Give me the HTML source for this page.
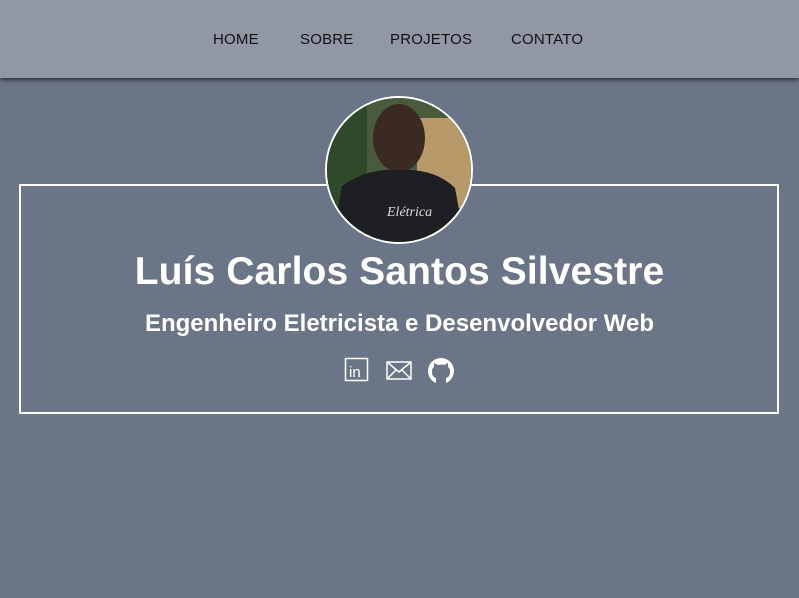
<!DOCTYPE html>
<html><head><style>
body{margin:0;width:799px;height:598px;background:#6b7588;font-family:"Liberation Sans",sans-serif;overflow:hidden;position:relative}
nav{position:absolute;left:0;top:0;width:799px;height:78px;background:#9197a5;box-shadow:0 2px 4px rgba(0,0,0,.6)}
nav a{position:absolute;top:31px;font-size:15px;color:#111;text-decoration:none;letter-spacing:.2px}
.box{position:absolute;left:19px;top:184px;width:756px;height:226px;border:2px solid #fff}
.pic{position:absolute;left:325px;top:96px;width:144px;height:144px;border-radius:50%;border:2px solid #fff;overflow:hidden;background:#3c4a3a}
h1{position:absolute;left:0;width:799px;top:250px;margin:0;text-align:center;color:#fff;font-size:39px;font-weight:bold;letter-spacing:.1px}
h2{position:absolute;left:0;width:799px;top:310px;margin:0;text-align:center;color:#fff;font-size:24px;font-weight:bold;letter-spacing:0}
</style></head><body>
<nav><a style="left:213px">HOME</a><a style="left:300px">SOBRE</a><a style="left:390px">PROJETOS</a><a style="left:511px">CONTATO</a></nav>
<div class="box"></div>
<div class="pic"><svg width="144" height="144">
<rect width="144" height="144" fill="#4a5a3c"/>
<rect x="90" y="20" width="54" height="90" fill="#b89a6a"/>
<rect x="0" y="0" width="40" height="110" fill="#2f4a2a"/>
<ellipse cx="72" cy="40" rx="26" ry="34" fill="#3b2a22"/>
<path d="M5 144 L15 88 Q40 70 72 72 Q108 70 128 90 L138 144Z" fill="#1e1f22"/>
<text x="60" y="118" fill="#ddd" font-size="14" font-style="italic" font-family="Liberation Serif">Elétrica</text>
</svg></div>
<h1>Luís Carlos Santos Silvestre</h1>
<h2>Engenheiro Eletricista e Desenvolvedor Web</h2>
<svg style="position:absolute;left:344px;top:357px" width="115" height="28">
<rect x="1.5" y="1.5" width="22" height="22" fill="none" stroke="#fff" stroke-width="1.5"/>
<text x="5" y="20" fill="#fff" font-size="15" font-family="Liberation Sans">in</text>
<rect x="43" y="5" width="24" height="17" fill="none" stroke="#fff" stroke-width="1.5"/>
<path d="M43 5 L55 15 L67 5 M43 22 L52 13 M67 22 L58 13" fill="none" stroke="#fff" stroke-width="1.5"/>
<circle cx="97" cy="14" r="13" fill="#fff"/>
<path d="M92 27 L92 21 Q88 20 88 15 Q88 11 90 10 L90 6 L94 8 Q97 7 100 8 L104 6 L104 10 Q106 11 106 15 Q106 20 102 21 L102 27Z" fill="#6b7588"/>
</svg>
</body></html>
